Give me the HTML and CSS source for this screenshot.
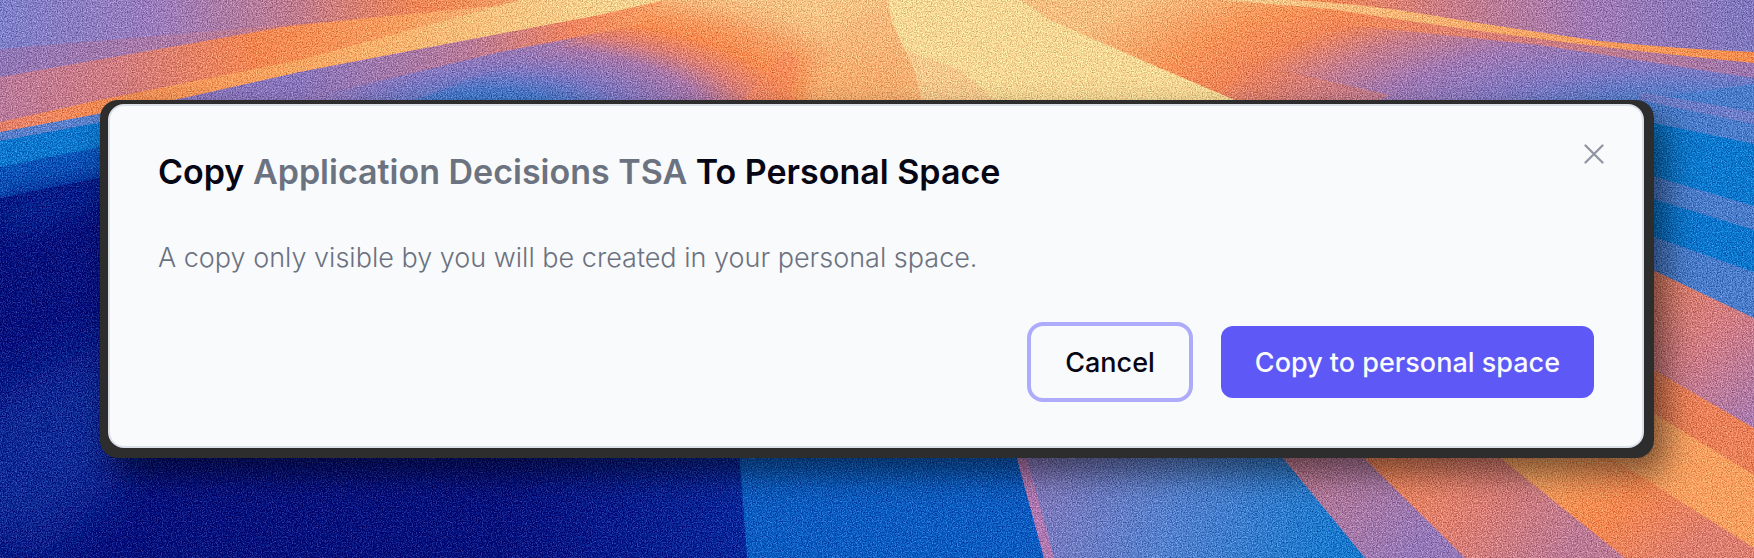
FILE: index.html
```html
<!DOCTYPE html>
<html lang="en">
  <head>
    <meta charset="UTF-8" />
    <meta name="viewport" content="width=device-width, initial-scale=1.0" />
    <title>Copy To Personal Space</title>
    <link rel="stylesheet" href="styles.css">
  </head>
  <body>
    <svg class="wallpaper" viewBox="0 0 1754 558" preserveAspectRatio="xMidYMid slice" aria-hidden="true">
      <defs>
        <filter id="grain" x="0" y="0" width="100%" height="100%" color-interpolation-filters="sRGB">
          <feTurbulence type="fractalNoise" baseFrequency="0.8" numOctaves="2" seed="4" result="noise" />
          <feColorMatrix in="noise" type="matrix" values="1 0 0 0 0  1 0 0 0 0  1 0 0 0 0  0 0 0 0 1" result="gray" />
          <feComposite in="SourceGraphic" in2="gray" operator="arithmetic" k2="1" k3="0.6" k4="-0.3" />
        </filter>
        <filter id="soft" x="-40%" y="-60%" width="180%" height="220%">
          <feGaussianBlur stdDeviation="12" />
        </filter>
        <filter id="haze" filterUnits="userSpaceOnUse" x="-100" y="100" width="900" height="600">
          <feGaussianBlur stdDeviation="26" />
        </filter>
        <linearGradient id="sky" gradientUnits="userSpaceOnUse" x1="0" y1="0" x2="620" y2="0">
          <stop offset="0" stop-color="#7d7fc8" />
          <stop offset="0.25" stop-color="#9a7cbc" />
          <stop offset="0.48" stop-color="#c07c8e" />
          <stop offset="0.68" stop-color="#f08554" />
          <stop offset="1" stop-color="#f6b878" />
        </linearGradient>
        <linearGradient id="sky2" gradientUnits="userSpaceOnUse" x1="0" y1="0" x2="460" y2="0">
          <stop offset="0" stop-color="#8f76b6" />
          <stop offset="0.4" stop-color="#ae7aa4" />
          <stop offset="0.75" stop-color="#dc7f6c" />
          <stop offset="1" stop-color="#f68a50" />
        </linearGradient>
        <linearGradient id="beam" gradientUnits="userSpaceOnUse" x1="0" y1="120" x2="620" y2="0">
          <stop offset="0" stop-color="#b87a9c" />
          <stop offset="0.2" stop-color="#d07c80" />
          <stop offset="0.42" stop-color="#f58650" />
          <stop offset="0.65" stop-color="#fa9d60" />
          <stop offset="1" stop-color="#f8cd8e" />
        </linearGradient>
        <linearGradient id="beamEdge" gradientUnits="userSpaceOnUse" x1="0" y1="130" x2="620" y2="0">
          <stop offset="0" stop-color="#e2806c" />
          <stop offset="0.15" stop-color="#f58a54" />
          <stop offset="0.5" stop-color="#fba662" />
          <stop offset="1" stop-color="#f8d290" />
        </linearGradient>
        <radialGradient id="dome" gradientUnits="userSpaceOnUse" cx="0" cy="0" r="1.3" gradientTransform="translate(490 118) scale(310 105)">
          <stop offset="0" stop-color="#2c70c2" />
          <stop offset="0.2" stop-color="#4a78c8" />
          <stop offset="0.36" stop-color="#8077c0" />
          <stop offset="0.54" stop-color="#a878aa" />
          <stop offset="0.65" stop-color="#da7f78" />
          <stop offset="0.77" stop-color="#fa8a50" />
          <stop offset="1" stop-color="#f8b076" />
        </radialGradient>
        <linearGradient id="domeBand" gradientUnits="userSpaceOnUse" x1="300" y1="0" x2="640" y2="0">
          <stop offset="0" stop-color="#8a76bc" />
          <stop offset="0.5" stop-color="#b87a98" />
          <stop offset="0.8" stop-color="#f08560" />
          <stop offset="1" stop-color="#fa9860" />
        </linearGradient>
        <linearGradient id="right" gradientUnits="userSpaceOnUse" x1="1200" y1="0" x2="1754" y2="0">
          <stop offset="0" stop-color="#f8b478" />
          <stop offset="0.22" stop-color="#f58852" />
          <stop offset="0.45" stop-color="#c87c88" />
          <stop offset="0.7" stop-color="#a07ab4" />
          <stop offset="1" stop-color="#7f78be" />
        </linearGradient>
        <radialGradient id="rightLow" gradientUnits="userSpaceOnUse" cx="0" cy="0" r="1.7" gradientTransform="translate(1690 145) scale(420 140)">
          <stop offset="0.1" stop-color="#3a78c8" />
          <stop offset="0.22" stop-color="#5a7cc8" />
          <stop offset="0.33" stop-color="#8079c2" />
          <stop offset="0.48" stop-color="#a179b2" />
          <stop offset="0.6" stop-color="#c87d8a" />
          <stop offset="0.7" stop-color="#f28658" />
          <stop offset="0.8" stop-color="#fa9358" />
          <stop offset="0.98" stop-color="#f8be80" />
        </radialGradient>
        <linearGradient id="streak" gradientUnits="userSpaceOnUse" x1="1250" y1="0" x2="1754" y2="0">
          <stop offset="0" stop-color="#f8c88a" />
          <stop offset="0.5" stop-color="#f9a868" />
          <stop offset="1" stop-color="#f78c4e" />
        </linearGradient>
        <linearGradient id="streakEdge" gradientUnits="userSpaceOnUse" x1="1330" y1="0" x2="1754" y2="0">
          <stop offset="0" stop-color="#fa8c54" />
          <stop offset="0.4" stop-color="#d87e78" />
          <stop offset="1" stop-color="#9a76b0" />
        </linearGradient>
        <linearGradient id="rose" gradientUnits="userSpaceOnUse" x1="1640" y1="280" x2="1754" y2="420">
          <stop offset="0" stop-color="#e07e62" />
          <stop offset="0.5" stop-color="#d07c84" />
          <stop offset="1" stop-color="#a87aae" />
        </linearGradient>
        <linearGradient id="navy" gradientUnits="userSpaceOnUse" x1="500" y1="0" x2="747" y2="0">
          <stop offset="0" stop-color="#04127e" />
          <stop offset="1" stop-color="#06289a" />
        </linearGradient>
        <linearGradient id="mauve" gradientUnits="userSpaceOnUse" x1="1290" y1="450" x2="1410" y2="558">
          <stop offset="0" stop-color="#c27a8c" />
          <stop offset="1" stop-color="#9478b8" />
        </linearGradient>
        <linearGradient id="coral" gradientUnits="userSpaceOnUse" x1="1400" y1="450" x2="1560" y2="558">
          <stop offset="0" stop-color="#f2875c" />
          <stop offset="0.5" stop-color="#da7e74" />
          <stop offset="1" stop-color="#bc7a94" />
        </linearGradient>
        <linearGradient id="amber" gradientUnits="userSpaceOnUse" x1="1580" y1="440" x2="1680" y2="558">
          <stop offset="0" stop-color="#f9a060" />
          <stop offset="0.5" stop-color="#f58750" />
          <stop offset="1" stop-color="#dc7e70" />
        </linearGradient>
        <linearGradient id="lake" gradientUnits="userSpaceOnUse" x1="1020" y1="450" x2="1330" y2="558">
          <stop offset="0" stop-color="#8a78b8" />
          <stop offset="0.5" stop-color="#5580cc" />
          <stop offset="1" stop-color="#1a78cc" />
        </linearGradient>
      </defs>
      <g filter="url(#grain)">
        <rect width="1754" height="558" fill="#04127e" />
        <path d="M-60 520 L-60 420 L130 330 L130 470 L40 558Z" fill="#0c2a94" filter="url(#haze)" />
        <!-- top left rays -->
        <path d="M0 0 H900 V20 L0 140Z" fill="url(#sky)" />
        <path d="M0 49 L345 20 L460 5 L300 40 L0 90Z" fill="url(#sky2)" />
        <path d="M0 77 L290 26 L420 13 L560 0 H900 V20 H575 L0 133Z" fill="url(#beam)" />
        <path d="M0 122 L100 100 L300 60 L520 0 H900 V20 H600 L175 100 L0 133Z" fill="url(#beamEdge)" />
        <!-- left blues -->
        <path d="M0 132 L130 108 V130 L0 146Z" fill="#5a7fca" />
        <path d="M0 141 L130 117 V146 L0 170Z" fill="#0a76cc" />
        <path d="M0 167 L130 141 V172 L0 198Z" fill="#0856b8" />
        <path d="M0 195 L130 169 V196 L0 240Z" fill="#04208c" filter="url(#soft)" />
        <!-- dome behind the window -->
        <path d="M150 106 L300 72 L600 15 L665 0 H950 V110 H150Z" fill="url(#dome)" />
        <path d="M170 101 L300 72 L600 15 L665 0 L640 24 L500 52 L300 100 L285 104Z" fill="url(#domeBand)" />
        <path d="M300 100 L500 52 L580 38 L415 100Z" fill="#8f7cc0" opacity="0.35" />
        <path d="M740 104 L785 50 L800 60 L790 110Z" fill="#f88a60" opacity="0.5" />
        <!-- centre light -->
        <path d="M640 -20 H1200 L1050 20 L850 30 L828 42 Q760 -2 640 -6Z" fill="#f8c688" opacity="0.9" filter="url(#soft)" />
        <path d="M838 30 L888 0 H1100 V110 H802 L826 55Z" fill="#f9b87c" filter="url(#soft)" />
        <path d="M826 60 L908 50 L922 110 H802Z" fill="#f8a566" opacity="0.6" filter="url(#soft)" />
        <path d="M888 0 H1100 L1260 110 H923 Q918 70 905 50 L892 22Z" fill="#f8d694" />
        <path d="M906 50 L960 70 L1000 104 H922 Q918 70 906 50Z" fill="#f8c88c" />
        <!-- top right rays -->
        <path d="M1200 0 H1754 V60 L1540 40 L1330 9Z" fill="url(#right)" />
        <path d="M1020 0 H1270 L1430 20 L1754 58 V110 H1258 L1160 68 L1100 42 L1050 20Z" fill="url(#rightLow)" />
        <path d="M1330 9 L1540 38 L1754 60 V78 L1540 45 L1350 25Z" fill="url(#streakEdge)" />
        <path d="M1235 60 L1390 95 L1360 110 H1260Z" fill="#e8805c" opacity="0.4" />
        <path d="M1220 0 H1290 Q1360 3 1430 15 T1600 41 Q1680 49 1754 52 V63 Q1640 52 1540 39 T1330 9Z" fill="url(#streak)" />
        <!-- right column -->
        <path d="M1640 100 L1754 84 V330 H1640Z" fill="#4a7cca" />
        <path d="M1640 92 L1754 112 V124 L1640 100Z" fill="#7c7cc4" opacity="0.7" />
        <path d="M1640 120 L1754 144 V206 L1640 172Z" fill="#0a78cc" />
        <path d="M1640 195 L1754 230 V272 L1640 232Z" fill="#0a76cc" />
        <path d="M1640 264 L1754 318 V450 H1640Z" fill="url(#rose)" />
        <path d="M1640 362 L1754 428 V558 H1640Z" fill="#ea8058" />
        <!-- bottom rays -->
        <path d="M500 440 H738 L747 558 H500Z" fill="url(#navy)" />
        <path d="M738 440 H1016 L1044 558 H747Z" fill="#0a5cc0" />
        <path d="M1012 440 H1283 L1375 558 H1044Z" fill="url(#lake)" />
        <path d="M1012 440 H1022 L1054 558 H1044Z" fill="#b078b0" />
        <path d="M1268 440 H1364 L1475 558 H1365Z" fill="url(#mauve)" />
        <path d="M1346 440 H1500 L1640 558 H1465Z" fill="url(#coral)" />
        <path d="M1478 440 H1660 L1754 500 V558 H1625Z" fill="url(#amber)" />
        <path d="M1584 440 L1640 405 L1754 475 V548Z" fill="#fa9f60" />
      </g>
    </svg>

    <main class="window">
      <section class="dialog" role="dialog" aria-labelledby="dialog-title">
        <button type="button" class="close" aria-label="Close">
          <svg viewBox="0 0 20 20" fill="none" stroke="currentColor" stroke-width="2.3" stroke-linecap="round">
            <path d="M1.500 1.500 18.500 18.500M18.500 1.500 1.500 18.500" />
          </svg>
        </button>
        <h1 class="title" id="dialog-title">Copy <span class="name">Application Decisions TSA</span> To Personal Space</h1>
        <p class="description">A copy only visible by you will be created in your personal space.</p>
        <div class="actions">
          <button type="button" class="btn btn-cancel">Cancel</button>
          <button type="button" class="btn btn-primary">Copy to personal space</button>
        </div>
      </section>
    </main>
  </body>
</html>
```

FILE: styles.css
```css
*,
*::after,
*::before {
  margin: 0;
  padding: 0;
  box-sizing: border-box;
}

html {
  font-family: Inter, "Liberation Sans", Arial, sans-serif;
}

body {
  min-height: 100vh;
  padding: 100px;
  background: #04127e;
}

.wallpaper {
  position: fixed;
  inset: 0;
  width: 100%;
  height: 100%;
  z-index: -1;
}

.window {
  padding: 4px 10px 10px 8px;
  border-radius: 18px;
  background: #2d2d2d;
  box-shadow: 12px 16px 32px rgba(0, 0, 0, 0.5);
}

.dialog {
  position: relative;
  display: flex;
  flex-direction: column;
  gap: 48px;
  padding: 48px;
  border: 2px solid #dadfe8;
  border-radius: 16px;
  background: #f9fafc;
}

.title {
  font-size: 34px;
  font-weight: 600;
  line-height: 36px;
  color: #070614;
}

.name {
  color: #6b7280;
}

.description {
  font-size: 27px;
  font-weight: 300;
  line-height: 40px;
  color: #6b7280;
}

.actions {
  display: flex;
  justify-content: flex-end;
  gap: 32px;
}

.btn {
  height: 72px;
  padding: 0 34px;
  border: 0;
  border-radius: 12px;
  font-family: inherit;
  font-size: 27px;
  font-weight: 500;
  cursor: pointer;
}

.btn-cancel {
  background: #f9fafc;
  color: #070614;
  box-shadow: 0 0 0 4px #afabfb;
}

.btn-primary {
  background: #5d58f6;
  color: #f9fafc;
}

/* sits in the corner, over the dialog padding */
.close {
  position: absolute;
  top: 38px;
  right: 38px;
  width: 20px;
  height: 20px;
  border: 0;
  background: none;
  color: #8f96a3;
  cursor: pointer;
}

.close svg {
  display: block;
}
```
